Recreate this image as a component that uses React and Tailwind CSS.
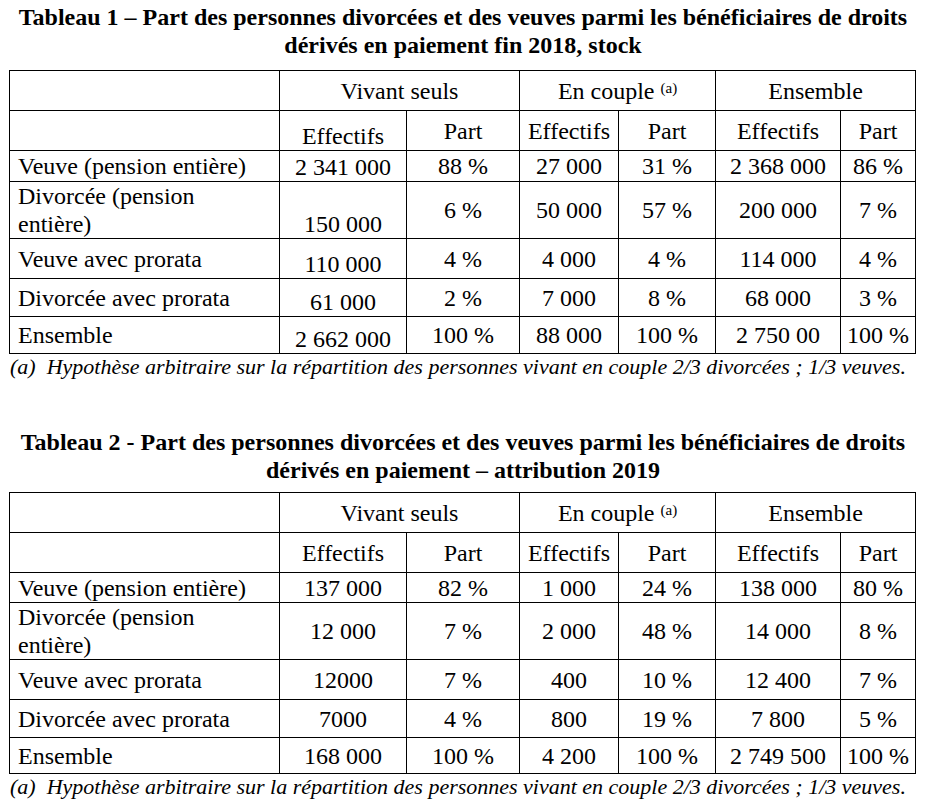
import React from "react";

const tables = [
  {
    title: ["Tableau 1 – Part des personnes divorcées et des veuves parmi les bénéficiaires de droits", "dérivés en paiement fin 2018, stock"],
    heights: ["h-[31px]", "h-[56px]", "h-[40px]", "h-[38px]", "h-[37px]"],
    bottomFirst: true,
    gap: "mt-[11px]",
    rows: [
      ["Veuve (pension entière)", "2 341 000", "88 %", "27 000", "31 %", "2 368 000", "86 %"],
      ["Divorcée (pension|entière)", "150 000", "6 %", "50 000", "57 %", "200 000", "7 %"],
      ["Veuve avec prorata", "110 000", "4 %", "4 000", "4 %", "114 000", "4 %"],
      ["Divorcée avec prorata", "61 000", "2 %", "7 000", "8 %", "68 000", "3 %"],
      ["Ensemble", "2 662 000", "100 %", "88 000", "100 %", "2 750 00", "100 %"],
    ],
  },
  {
    title: ["Tableau 2 - Part des personnes divorcées et des veuves parmi les bénéficiaires de droits", "dérivés en paiement – attribution 2019"],
    heights: ["h-[30px]", "h-[57px]", "h-[40px]", "h-[38px]", "h-[36px]"],
    bottomFirst: false,
    gap: "mt-[8px]",
    rows: [
      ["Veuve (pension entière)", "137 000", "82 %", "1 000", "24 %", "138 000", "80 %"],
      ["Divorcée (pension|entière)", "12 000", "7 %", "2 000", "48 %", "14 000", "8 %"],
      ["Veuve avec prorata", "12000", "7 %", "400", "10 %", "12 400", "7 %"],
      ["Divorcée avec prorata", "7000", "4 %", "800", "19 %", "7 800", "5 %"],
      ["Ensemble", "168 000", "100 %", "4 200", "100 %", "2 749 500", "100 %"],
    ],
  },
];

const cell = "border border-black p-0 text-center whitespace-nowrap";

function Table({ data }) {
  return (
    <div>
      <h2 className="text-center font-bold text-[24px] leading-[28px] whitespace-nowrap">
        {data.title[0]}
        <br />
        {data.title[1]}
      </h2>

      <table className={`${data.gap} ml-[9px] border-collapse table-fixed w-[906px] text-[24px] leading-[28px]`}>
        <colgroup>
          <col className="w-[270px]" />
          <col className="w-[127px]" />
          <col className="w-[113px]" />
          <col className="w-[99px]" />
          <col className="w-[97px]" />
          <col className="w-[125px]" />
          <col className="w-[75px]" />
        </colgroup>
        <tbody>
          <tr className="h-[40px]">
            <td className={cell}></td>
            <td colSpan={2} className={cell}>Vivant seuls</td>
            <td colSpan={2} className={cell}>
              En couple <sup className="text-[15px] relative -top-[6px]">(a)</sup>
            </td>
            <td colSpan={2} className={cell}>Ensemble</td>
          </tr>
          <tr className="h-[40px]">
            <td className={cell}></td>
            <td className={`${cell} ${data.bottomFirst ? "align-bottom" : "align-middle"}`}>Effectifs</td>
            <td className={cell}>Part</td>
            <td className={cell}>Effectifs</td>
            <td className={cell}>Part</td>
            <td className={cell}>Effectifs</td>
            <td className={cell}>Part</td>
          </tr>
          {data.rows.map((row, i) => (
            <tr key={i} className={data.heights[i]}>
              <td className="border border-black py-0 pl-[8px] text-left whitespace-nowrap">
                {row[0].split("|").map((line, j) => (
                  <div key={j}>{line}</div>
                ))}
              </td>
              {row.slice(1).map((v, j) => (
                <td
                  key={j}
                  className={`${cell} ${j === 0 && data.bottomFirst ? "align-bottom" : "align-middle"}`}
                >
                  {v}
                </td>
              ))}
            </tr>
          ))}
        </tbody>
      </table>

      <p className="pl-[10px] italic text-[22px] leading-[26px] whitespace-nowrap">
        (a)&nbsp; Hypothèse arbitraire sur la répartition des personnes vivant en couple 2/3 divorcées ; 1/3 veuves.
      </p>
    </div>
  );
}

export default function App() {
  return (
    <div className="font-['Liberation_Serif'] w-[926px] h-[801px] bg-white text-black overflow-hidden">
      <div className="pt-[3px]">
        <Table data={tables[0]} />
      </div>
      <div className="pt-[48px]">
        <Table data={tables[1]} />
      </div>
    </div>
  );
}
